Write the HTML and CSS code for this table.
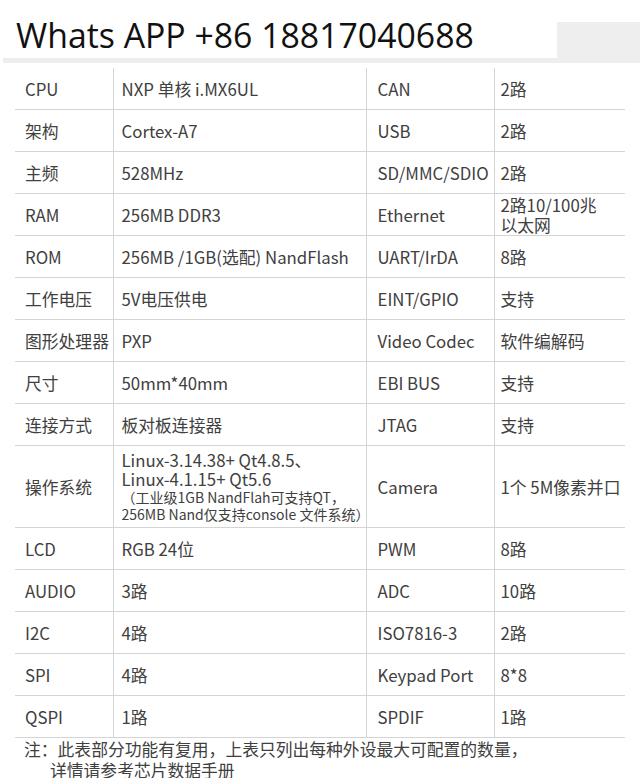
FILE: index.html
```html
<!DOCTYPE html>
<html lang="zh">
<head>
<meta charset="utf-8">
<title>Spec</title>
<link rel="stylesheet" href="styles.css">
</head>
<body>
<div class="header">
  <div class="title">Whats APP +86 18817040688</div>
  <div class="side"></div>
</div>
<table class="spec">
  <colgroup><col class="c1"><col class="c2"><col class="c3"><col class="c4"></colgroup>
  <tr class="first"><td>CPU</td><td>NXP 单核 i.MX6UL</td><td>CAN</td><td>2路</td></tr>
  <tr><td>架构</td><td>Cortex-A7</td><td>USB</td><td>2路</td></tr>
  <tr><td>主频</td><td>528MHz</td><td>SD/MMC/SDIO</td><td>2路</td></tr>
  <tr><td>RAM</td><td>256MB DDR3</td><td>Ethernet</td><td class="wrap">2路10/100兆<br>以太网</td></tr>
  <tr><td>ROM</td><td>256MB /1GB(选配) NandFlash</td><td>UART/IrDA</td><td>8路</td></tr>
  <tr><td>工作电压</td><td>5V电压供电</td><td>EINT/GPIO</td><td>支持</td></tr>
  <tr><td>图形处理器</td><td>PXP</td><td>Video Codec</td><td>软件编解码</td></tr>
  <tr><td>尺寸</td><td>50mm*40mm</td><td>EBI BUS</td><td>支持</td></tr>
  <tr><td>连接方式</td><td>板对板连接器</td><td>JTAG</td><td>支持</td></tr>
  <tr class="tall"><td>操作系统</td><td class="os"><div class="os-main">Linux-3.14.38+ Qt4.8.5、<br>Linux-4.1.15+ Qt5.6</div><div class="os-note">（工业级1GB NandFlah可支持QT，<br>256MB Nand仅支持console 文件系统）</div></td><td>Camera</td><td>1个 5M像素并口</td></tr>
  <tr><td>LCD</td><td>RGB 24位</td><td>PWM</td><td>8路</td></tr>
  <tr><td>AUDIO</td><td>3路</td><td>ADC</td><td>10路</td></tr>
  <tr><td>I2C</td><td>4路</td><td>ISO7816-3</td><td>2路</td></tr>
  <tr><td>SPI</td><td>4路</td><td>Keypad Port</td><td>8*8</td></tr>
  <tr><td>QSPI</td><td>1路</td><td>SPDIF</td><td>1路</td></tr>
</table>
<div class="note">
  <div>注：此表部分功能有复用，上表只列出每种外设最大可配置的数量，</div>
  <div class="indent">详情请参考芯片数据手册</div>
</div>
</body>
</html>
```
FILE: styles.css
```css
html, body {
  margin: 0;
  padding: 0;
  background: #fff;
}
body {
  width: 640px;
  height: 778px;
  overflow: hidden;
  font-family: "Noto Sans CJK SC", "Noto Sans", sans-serif;
  color: #404040;
}
.header {
  display: flex;
  align-items: flex-end;
  height: 63px;
}
.title {
  width: 554px;
  margin-left: 3px;
  height: 58px;
  box-sizing: border-box;
  border-bottom: 5px solid #eeeeee;
  padding-left: 13px;
  padding-top: 12px;
  font-family: "Open Sans", "Liberation Sans", sans-serif;
  font-size: 33.8px;
  line-height: 36px;
  color: #111;
  letter-spacing: 0;
}
.side {
  flex: 1;
  height: 41px;
  background: #eeeeee;
}
.spec {
  margin: 5px 0 0 15px;
  width: 610px;
  border-collapse: collapse;
  table-layout: fixed;
  font-size: 16.8px;
}
.c1 { width: 98px; }
.c2 { width: 253px; }
.c3 { width: 128px; }
.c4 { width: 131px; }
.spec td {
  height: 41px;
  padding: 0 0 0 10px;
  border-bottom: 1px solid #d4d4d4;
  border-left: 1px solid #d4d4d4;
  vertical-align: middle;
  line-height: 20px;
  white-space: nowrap;
}
.spec td:first-child {
  border-left: none;
}
.spec td:nth-child(2) { padding-left: 8px; }
.spec td:nth-child(3) { padding-left: 11px; }
.spec td:nth-child(4) { padding-left: 6px; }
.spec tr.tall td { height: 81px; }
.os-main { line-height: 19px; }
.os-note {
  font-size: 14px;
  line-height: 17px;
}
.note {
  margin: 1px 0 0 24px;
  font-size: 16.8px;
  line-height: 21px;
}
.indent { padding-left: 26px; }
```
